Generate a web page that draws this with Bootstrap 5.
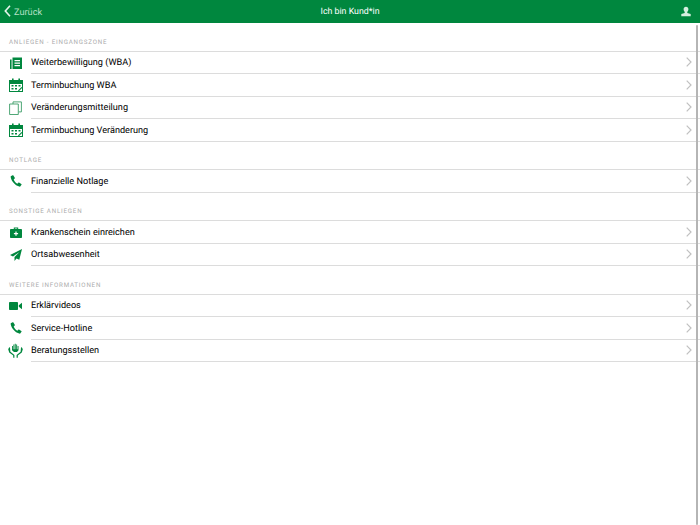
<!DOCTYPE html>
<html lang="de">

<head>
    <meta charset="UTF-8" />
    <meta name="viewport" content="width=device-width, initial-scale=1" />
    <title>Ich bin Kund*in</title>
    <link href="https://cdn.jsdelivr.net/npm/bootstrap@5.3.0/dist/css/bootstrap.min.css" rel="stylesheet" />
    <style>
        html, body { height: 100%; overflow: hidden; }
        body { font-family: Roboto, "Liberation Sans", sans-serif; background: #fff; color: #000; text-rendering: geometricPrecision; }
        .top-bar { height: 23px; background: #00873e; color: #fff; font-size: 8.8px; padding-top: 3px; }
        .top-bar svg { margin-top: -3px; }
        .top-side { flex: 1 1 0; }
        .back-link { color: #b5e0c6; font-size: 9.2px; text-decoration: none; gap: 3px; margin-left: 4px; }
        .user-icon { margin-right: 9px; }
        .group-head { height: 28.5px; padding: 0 0 3.500px 9px; font-size: 6.2px; letter-spacing: .8px; color: #ababab; border-bottom: 1px solid #dcdcdc; }
        .entry { height: 22.5px; font-size: 9.15px; }
        .entry-icon { width: 31px; flex: none; }
        .entry-body { border-bottom: 1px solid #dcdcdc; padding-right: 8.500px; padding-top: 3.500px; }
        .entry-body svg { margin-top: -3.500px; }
        .scroll-thumb { position: absolute; top: 25px; right: 2px; bottom: 0; width: 2px; background: #b5b5b5; border-radius: 1px; }
        .ic { fill: #00873e; display: block; }
    </style>
</head>

<body class="position-relative">
    <svg width="0" height="0" class="position-absolute">
        <symbol id="i-cal" viewBox="0 0 14 14">
            <path d="M0 2h14v12H0z" />
            <path d="M1 6h12v7H1z" fill="#fff" />
            <path d="M3 .5h1.600v3H3zM9.400 .5H11v3H9.400z" />
            <path d="M2.500 7h2v1.600h-2zM6 7h2v1.600H6zM9.500 7h2v1.600h-2zM2.500 10h2v1.600h-2zM6 10h2v1.600H6z" />
            <path d="M9 12.500l3.500-3.500 .8 .8-3.500 3.500z" />
        </symbol>
        <symbol id="i-phone" viewBox="0 0 12 12">
            <path d="M2.600 .3L.7 1.300C.3 4.200 4.500 11 10 11.700l1.500-1.900c.2-.3.100-.6-.2-.8L9 7.600c-.3-.1-.5-.1-.7.100l-1 1C5.800 7.800 4.300 6 3.700 4.400l1-.9c.2-.2.200-.4.100-.7L3.400 .5c-.2-.3-.5-.4-.8-.2z" />
        </symbol>
        <symbol id="i-chev" viewBox="0 0 6 10">
            <path d="M.7 .6L5 5 .7 9.400" fill="none" stroke="#c0c0c0" stroke-width="1.200" />
        </symbol>
    </svg>

    <nav class="top-bar d-flex align-items-center">
        <div class="top-side d-flex align-items-center">
            <a href="#" class="back-link d-inline-flex align-items-center">
                <svg width="7" height="12" viewBox="0 0 7 12"><path d="M6 .8L1.300 6 6 11.200" fill="none" stroke="#e6f5ec" stroke-width="1.600" /></svg>
                Zurück
            </a>
        </div>
        <div>Ich bin Kund*in</div>
        <div class="top-side d-flex justify-content-end">
            <svg class="user-icon" width="10" height="11" viewBox="0 0 10 10" fill="#d5efdf"><path d="M5 .2c1.500 0 2.400 1.100 2.400 2.600 0 1.100-.5 2-1.100 2.600v1L9.700 7.500V9.800H.3V7.500L3.700 6.400v-1C3.100 4.800 2.600 3.900 2.600 2.800 2.600 1.300 3.500 .2 5 .2z" /></svg>
        </div>
    </nav>

    <div class="group-head d-flex align-items-end">ANLIEGEN - EINGANGSZONE</div>
    <div class="entry d-flex">
        <div class="entry-icon d-flex align-items-center justify-content-center">
            <svg class="ic" width="12" height="12" viewBox="0 0 12 12"><path d="M2.500 .5H12v11.500H2.500z" /><path d="M0 2.500h1.600V12H0z" /><path d="M4.500 3h5.500v1.200H4.500zM4.500 5.500h5.500v1.200H4.500zM4.500 8h5.500v1.200H4.500z" fill="#fff" /></svg>
        </div>
        <div class="entry-body flex-grow-1 d-flex align-items-center justify-content-between">Weiterbewilligung (WBA)<svg width="6" height="10"><use href="#i-chev" /></svg></div>
    </div>
    <div class="entry d-flex">
        <div class="entry-icon d-flex align-items-center justify-content-center"><svg class="ic" width="14" height="14"><use href="#i-cal" /></svg></div>
        <div class="entry-body flex-grow-1 d-flex align-items-center justify-content-between">Terminbuchung WBA<svg width="6" height="10"><use href="#i-chev" /></svg></div>
    </div>
    <div class="entry d-flex">
        <div class="entry-icon d-flex align-items-center justify-content-center">
            <svg width="13" height="14" viewBox="0 0 13 14" fill="none" stroke="#3c9d68" stroke-width=".9"><path d="M4 3V.9h8.400v10H9.500" /><path d="M.6 3h8.700v10.500H.6z" fill="#fff" /></svg>
        </div>
        <div class="entry-body flex-grow-1 d-flex align-items-center justify-content-between">Veränderungsmitteilung<svg width="6" height="10"><use href="#i-chev" /></svg></div>
    </div>
    <div class="entry d-flex">
        <div class="entry-icon d-flex align-items-center justify-content-center"><svg class="ic" width="14" height="14"><use href="#i-cal" /></svg></div>
        <div class="entry-body flex-grow-1 d-flex align-items-center justify-content-between">Terminbuchung Veränderung<svg width="6" height="10"><use href="#i-chev" /></svg></div>
    </div>

    <div class="group-head d-flex align-items-end">NOTLAGE</div>
    <div class="entry d-flex">
        <div class="entry-icon d-flex align-items-center justify-content-center"><svg class="ic" width="12" height="12"><use href="#i-phone" /></svg></div>
        <div class="entry-body flex-grow-1 d-flex align-items-center justify-content-between">Finanzielle Notlage<svg width="6" height="10"><use href="#i-chev" /></svg></div>
    </div>

    <div class="group-head d-flex align-items-end">SONSTIGE ANLIEGEN</div>
    <div class="entry d-flex">
        <div class="entry-icon d-flex align-items-center justify-content-center">
            <svg class="ic" width="12" height="11" viewBox="0 0 12 11"><path d="M3.800 2V.5h4.400V2H7.200v-.6H4.800V2z" /><path d="M.8 2h10.400c.5 0 .8 .3 .8 .8v7.400c0 .5-.3 .8-.8 .8H.8c-.5 0-.8-.3-.8-.8V2.800C0 2.300 .3 2 .8 2z" /><path d="M5.400 4.500h1.200v1.500h1.500v1.200H6.600v1.500H5.400V7.200H3.900V6h1.500z" fill="#fff" /></svg>
        </div>
        <div class="entry-body flex-grow-1 d-flex align-items-center justify-content-between">Krankenschein einreichen<svg width="6" height="10"><use href="#i-chev" /></svg></div>
    </div>
    <div class="entry d-flex">
        <div class="entry-icon d-flex align-items-center justify-content-center">
            <svg class="ic" width="12" height="12" viewBox="0 0 12 12"><path d="M12 0L0 6l3 1.400L9.500 3 4.500 8v4l2-2.600 2.800 1.300z" /></svg>
        </div>
        <div class="entry-body flex-grow-1 d-flex align-items-center justify-content-between">Ortsabwesenheit<svg width="6" height="10"><use href="#i-chev" /></svg></div>
    </div>

    <div class="group-head d-flex align-items-end">WEITERE INFORMATIONEN</div>
    <div class="entry d-flex">
        <div class="entry-icon d-flex align-items-center justify-content-center">
            <svg class="ic" width="13" height="8" viewBox="0 0 13 8"><path d="M.8 0h7.400c.5 0 .8 .3 .8 .8v6.400c0 .5-.3 .8-.8 .8H.8C.3 8 0 7.700 0 7.200V.8C0 .3 .3 0 .8 0z" /><path d="M9.800 3.200L13 .8v6.400L9.800 4.800z" /></svg>
        </div>
        <div class="entry-body flex-grow-1 d-flex align-items-center justify-content-between">Erklärvideos<svg width="6" height="10"><use href="#i-chev" /></svg></div>
    </div>
    <div class="entry d-flex">
        <div class="entry-icon d-flex align-items-center justify-content-center"><svg class="ic" width="12" height="12"><use href="#i-phone" /></svg></div>
        <div class="entry-body flex-grow-1 d-flex align-items-center justify-content-between">Service-Hotline<svg width="6" height="10"><use href="#i-chev" /></svg></div>
    </div>
    <div class="entry d-flex">
        <div class="entry-icon d-flex align-items-center justify-content-center">
            <svg class="ic" width="15" height="15" viewBox="0 0 15 15"><path d="M4 3h.9v3.200h.5V1.400h.9v4.800h.5V.7h.9v5.500h.5V1.400h.9v4.800h.5V3h.9v4.300L9 9H6L4 7.300z" /><path d="M1.200 4.200l.8 .2 .4 4.300 4 3.300v2.800H5.200V12.500L1.200 9.600 .2 6.300zM13.800 4.200l-.8 .2-.4 4.300-4 3.300v2.800h1.200V12.500l4-2.900 1-3.300z" /></svg>
        </div>
        <div class="entry-body flex-grow-1 d-flex align-items-center justify-content-between">Beratungsstellen<svg width="6" height="10"><use href="#i-chev" /></svg></div>
    </div>

    <div class="scroll-thumb"></div>

    <script src="https://cdn.jsdelivr.net/npm/bootstrap@5.3.0/dist/js/bootstrap.bundle.min.js"></script>
</body>

</html>
